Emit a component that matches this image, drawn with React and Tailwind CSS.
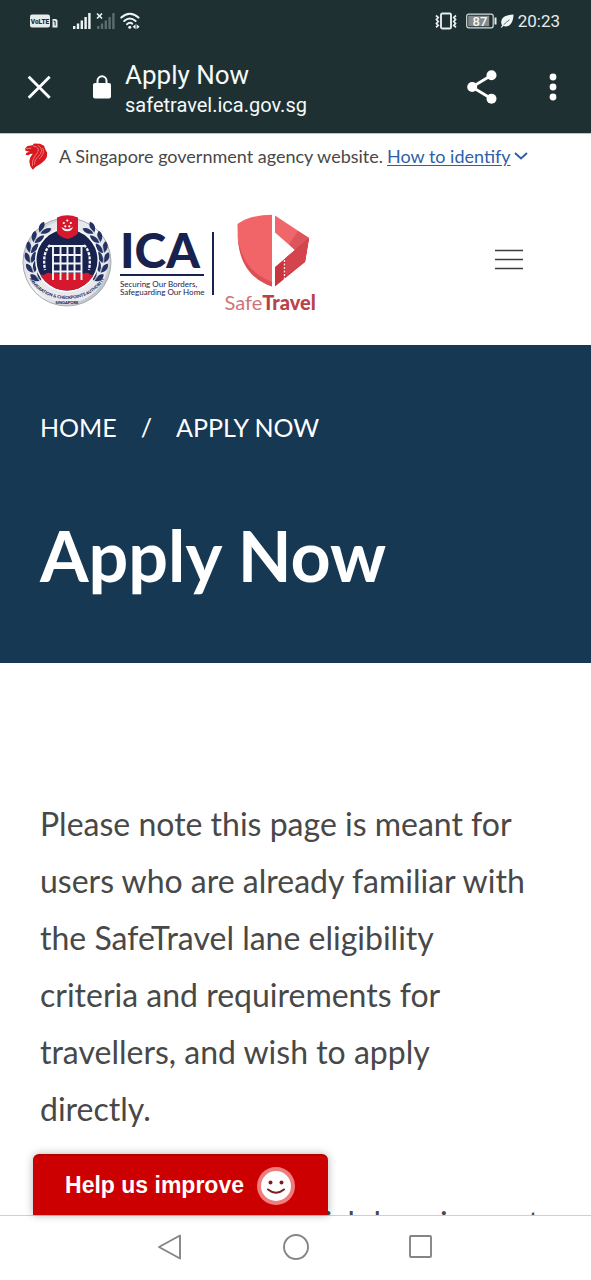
import React from "react";

function SignalBars({ active }) {
  return (
    <svg className="h-[18px] w-5" viewBox="0 0 20 18" aria-hidden="true">
      <g fill={active ? "#eef4f4" : "#5b6b6e"}>
        <rect x="1" y="14" width="2.4" height="3" />
        <rect x="4.8" y="11.5" width="2.4" height="5.5" />
        <rect x="8.6" y="8.5" width="2.4" height="8.5" />
        <rect x="12.4" y="5" width="2.4" height="12" />
        <rect x="16.2" y="1" width="2.4" height="16" />
      </g>
      {!active && <path d="M1 1.500l5 5M6 1.500l-5 5" stroke="#eef4f4" strokeWidth="1.600" />}
    </svg>
  );
}

function StatusBar() {
  return (
    <div className="flex h-[41px] items-center justify-between pl-[30px] pr-[31px]">
      <div className="flex items-center">
        <svg className="mr-3.5 h-3.5 w-7" viewBox="0 0 28 14" aria-hidden="true">
          <rect x="0" y="0.5" width="20" height="13" rx="2" fill="#e6ecec" />
          <text x="10" y="9.700" textAnchor="middle" fontFamily="Roboto, sans-serif" fontWeight="900" fontSize="6.500" fill="#1f3033">VoLTE</text>
          <path d="M22.500 5h3.700l1.300 1.400V13.500h-5V6z" fill="#e6ecec" />
          <path d="M23.600 7.300h1.500v4.200" fill="none" stroke="#1f3033" strokeWidth="1" />
        </svg>
        <SignalBars active />
        <span className="ml-1 flex"><SignalBars /></span>
        <svg className="ml-1 h-[18px] w-5" viewBox="0 0 20 18" aria-hidden="true">
          <g fill="none" stroke="#eef4f4" strokeWidth="2" strokeLinecap="round">
            <path d="M1.300 5.600Q9.800-2 18.500 5.600" />
            <path d="M4.200 9Q9.800 4 15.600 9" />
            <path d="M7 12.200Q9.800 9.700 12.200 11.600" />
          </g>
          <circle cx="9.800" cy="15.300" r="1.500" fill="#eef4f4" />
          <path d="M15.600 12.200v5l-3-2.500zM16.600 12.200v5l3-2.500z" fill="#eef4f4" />
        </svg>
      </div>
      <div className="flex items-center">
        <svg className="h-[18px] w-6" viewBox="0 0 24 18" fill="none" stroke="#e6ecec" aria-hidden="true">
          <rect x="7" y="1.500" width="10" height="15" rx="1.200" strokeWidth="1.900" />
          <path d="M2 3.500l2.200 2-1.700 2 1.700 2-1.700 2 1.700 2-2.200 1.800M22 3.500l-2.200 2 1.700 2-1.700 2 1.700 2-1.700 2 2.200 1.800" strokeWidth="1.800" />
        </svg>
        <svg className="ml-2 h-4 w-8" viewBox="0 0 32 16" aria-hidden="true">
          <rect x="0.700" y="1.200" width="26.500" height="13.600" rx="2" fill="none" stroke="#d5dddd" strokeWidth="1.200" />
          <rect x="2.200" y="2.700" width="21" height="10.600" fill="#84898c" />
          <text x="14" y="12.700" textAnchor="middle" fontFamily="Roboto, sans-serif" fontWeight="500" fontSize="13" fill="#f4f8f8">87</text>
          <rect x="28.500" y="4.500" width="2" height="7" fill="#e6ecec" />
        </svg>
        <svg className="ml-0.5 h-3.5 w-3.5" viewBox="0 0 14 14" aria-hidden="true">
          <path d="M13.500.500C7 .8 1.500 3 1.200 8c0 1.700.5 2.700 1 3.400L.6 13.200l.9.500 1.900-1.700C9.500 14 13.500 8.500 13.500.500z" fill="#f0f5f5" />
          <path d="M3.600 10.800Q6 8.300 9.500 5.800" stroke="#1f3033" strokeWidth=".7" fill="none" />
        </svg>
        <span className="ml-1 font-[Roboto,sans-serif] text-[17px] leading-5 text-[#e6ecec]">20:23</span>
      </div>
    </div>
  );
}

function BrowserBar() {
  return (
    <div className="flex h-[92px] items-center pl-[27px] pr-8">
      <button aria-label="Close tab" className="shrink-0">
        <svg className="h-6 w-6" viewBox="0 0 24 24" stroke="#fff" strokeWidth="2.800"><path d="M1.700 1.700l21 21M22.700 1.700l-21 21" /></svg>
      </button>
      <svg className="ml-[41px] h-6 w-5 shrink-0" viewBox="0 0 20 24" aria-hidden="true">
        <rect x="1" y="8" width="18" height="15.500" rx="2" fill="#fff" />
        <path d="M5.500 9V5.800a4.500 4.500 0 019 0V9" fill="none" stroke="#fff" strokeWidth="2" />
      </svg>
      <div className="ml-[13px] flex min-w-0 flex-1 flex-col pt-1 font-[Roboto,sans-serif] text-[#f5fafa]">
        <span className="text-[26px] leading-8">Apply Now</span>
        <span className="text-xl leading-7">safetravel.ica.gov.sg</span>
      </div>
      <button aria-label="Share" className="shrink-0">
        <svg className="h-[34px] w-[30px]" viewBox="0 0 30 34">
          <path d="M24.500 5.300L5 17l19.500 11.700" fill="none" stroke="#fff" strokeWidth="2.800" />
          <circle cx="24.500" cy="5.300" r="5" fill="#fff" /><circle cx="5.200" cy="17" r="5" fill="#fff" /><circle cx="24.500" cy="28.700" r="5" fill="#fff" />
        </svg>
      </button>
      <button aria-label="More options" className="ml-[50px] shrink-0">
        <svg className="h-7 w-3" viewBox="0 0 12 28" fill="#fff"><circle cx="6" cy="4" r="3.400" /><circle cx="6" cy="14" r="3.400" /><circle cx="6" cy="24" r="3.400" /></svg>
      </button>
    </div>
  );
}

function LionHead() {
  return (
    <svg className="h-[27px] w-6 shrink-0" viewBox="0 0 24 27" aria-hidden="true">
      <path d="M1 5.500L3.500 3l5-.8L10 .5l6 .2 4 2 1.500 4 1.700 3-.4 4.500-2 3-4 3.500-5 3-3 3-2.500-3.500-1-5 1-4 2.500-3.500-2.500.3-2 1.300-2.800-.6 1-2 3-1-4-1z" fill="#d71920" />
      <path d="M9 3c6 .5 6.500 4.500 3.500 8S8 18 8.500 23M14 2.500c5 3 4 7 1 10s-4.500 5-4.500 9M18.500 5c2.500 5-1 9-3.500 11M1.800 5.800l5.500-.6" fill="none" stroke="#ff9c96" strokeWidth=".7" />
    </svg>
  );
}

const leaves = [
  [15, 63, -35], [10, 54, -20], [8, 44, -5], [9, 34, 12], [14, 24, 28], [21, 15, 42],
];

function Wreath() {
  return (
    <g>
      {leaves.map(([x, y, a]) => (
        <g key={y} transform={`translate(${x} ${y}) rotate(${a})`}>
          <path d="M0 5C-6 2-6-3-4-6 0-4 1 0 0 5zM1 5C0-1 3-5 6-6 8-1 5 3 1 5z" fill="#253363" />
          <path d="M0 6V-3" stroke="#dfe2ec" strokeWidth=".6" />
        </g>
      ))}
    </g>
  );
}

function Emblem() {
  return (
    <svg className="h-[94px] w-[90px] shrink-0" viewBox="0 0 90 94" role="img" aria-label="Immigration and Checkpoints Authority crest">
      <defs>
        <linearGradient id="ring" x1="0" y1="0" x2="1" y2="1">
          <stop offset="0" stopColor="#c4c6cc" /><stop offset=".5" stopColor="#f6f6f8" /><stop offset="1" stopColor="#a9acb5" />
        </linearGradient>
        <clipPath id="disc"><circle cx="45" cy="46" r="30.500" /></clipPath>
        <path id="motto" d="M4.500 52A40.500 33 0 0085.500 52" />
      </defs>
      <circle cx="45" cy="48" r="44" fill="url(#ring)" stroke="#a8abb4" strokeWidth="1" />
      <circle cx="45" cy="48" r="41" fill="#e8e9ed" />
      <Wreath />
      <g transform="translate(90 0) scale(-1 1)"><Wreath /></g>
      <circle cx="45" cy="46" r="32" fill="#fff" />
      <circle cx="45" cy="46" r="30.500" fill="#17224f" />
      <path clipPath="url(#disc)" d="M14 64q4-5 8-3 4-4 8-1 4-3 7 0 4-3 8 0 4-3 8 0 4-3 8 0 4-3 8 1 5-1 8 3v16H14z" fill="#d5182d" />
      <g stroke="#f4f5f8" fill="none">
        <path d="M31 31V66M38.500 31V66M45.500 31V66M52.500 31V66M59.500 31V66" strokeWidth="1.900" />
        <path d="M28 32H62M30 41H60M30 49.500H60M30 57.500H60" strokeWidth="2" />
        <path d="M28 31Q20 39 23 56M62 31Q70 39 67 56" strokeWidth="2.300" strokeDasharray="3 1.300" />
      </g>
      <path d="M35 3.500Q45-1 56 3.500V19Q53 23 45.500 25 38 23 35 19z" fill="#d5182d" />
      <path d="M39.500 13a6 6 0 0011.500 0 7.500 6 0 01-11.500 0z" fill="#fff" />
      <g fill="#fff"><circle cx="45.300" cy="6.500" r="1.100" /><circle cx="41.800" cy="9" r="1.100" /><circle cx="48.800" cy="9" r="1.100" /><circle cx="43.300" cy="12.300" r="1.100" /><circle cx="47.300" cy="12.300" r="1.100" /></g>
      <text fontFamily="Lato, sans-serif" fontWeight="900" fontSize="4.200" fill="#17224f"><textPath href="#motto" startOffset="50%" textAnchor="middle">IMMIGRATION &amp; CHECKPOINTS AUTHORITY</textPath></text>
      <text x="45" y="89.500" textAnchor="middle" fontFamily="Lato, sans-serif" fontWeight="900" fontSize="4" fill="#17224f">SINGAPORE</text>
    </svg>
  );
}

function SafeTravelShield() {
  return (
    <svg className="ml-1.5 h-[74px] w-[74px]" viewBox="0 0 74 74" aria-hidden="true">
      <path d="M36 .8V72.500C14 65 1 46 1.500 10Q14 1 36 .8z" fill="#f16569" />
      <path d="M1.500 19C4 45 15 60 36 68V72.500C14 65 2 48 1.500 19z" fill="#dc4f57" />
      <path d="M39 1.500L73 24 69 30 59 36 39 18.500z" fill="#f0676b" />
      <path d="M62 17L73 24 69 48 59 36 53 30.500z" fill="#dd555c" />
      <path d="M73 24L69 48 39 72.500V53L59 36z" fill="#c9353e" />
      <path d="M73 24L69 48 50 62V43.500L59 36z" fill="#d4444c" />
      <path d="M48.500 46V65" stroke="#ffe6e6" strokeWidth="1.400" strokeDasharray="2 1.500" />
    </svg>
  );
}

function SiteHeader() {
  return (
    <header className="border-t border-[#bcc3c8] bg-white">
      <div className="flex items-center px-6 pt-2 text-lg leading-7 text-[#484848]">
        <LionHead />
        <p className="ml-[11px]">A Singapore government agency website.</p>
        <button className="ml-1 flex items-center text-[#2f5fa8]">
          <span className="underline underline-offset-2">How to identify</span>
          <svg className="ml-0.5 h-4 w-4" viewBox="0 0 16 16" fill="none" stroke="currentColor" strokeWidth="2" aria-hidden="true"><path d="M2 5l6 5.500L14 5" /></svg>
        </button>
      </div>
      <div className="flex items-start pb-[29px] pl-[22px] pr-[68px] pt-11">
        <Emblem />
        <div className="ml-2 mt-3 text-[#17224f]">
          <div className="text-5xl leading-[48px] font-black">ICA</div>
          <div className="border-t-2 border-[#17224f] pt-1 text-[8px] leading-2 whitespace-nowrap">
            Securing Our Borders,<br />Safeguarding Our Home
          </div>
        </div>
        <div className="ml-2 mt-[18px] h-[63px] w-0.5 shrink-0 bg-[#17224f]" />
        <div className="ml-2.5 flex flex-col items-center">
          <SafeTravelShield />
          <span className="text-xl leading-7 text-[#cf7478]">Safe<b className="font-black text-[#b9424a]">Travel</b></span>
        </div>
        <button aria-label="Open menu" className="ml-auto mt-[34px]">
          <svg className="h-6 w-7" viewBox="0 0 28 24" stroke="#3c3c3c" strokeWidth="1.500"><path d="M0 2.500h28M0 11.500h28M0 20.500h28" /></svg>
        </button>
      </div>
    </header>
  );
}

function Hero() {
  return (
    <section className="bg-[#163853] px-10 pb-[60px] pt-16 text-white">
      <nav aria-label="Breadcrumb" className="flex gap-6 text-[25px] leading-9">
        <a href="#home">HOME</a>
        <span>/</span>
        <a href="#apply">APPLY NOW</a>
      </nav>
      <h1 className="mt-[62px] text-[70px] leading-[96px] font-bold">Apply Now</h1>
    </section>
  );
}

function FeedbackButton() {
  return (
    <button className="absolute bottom-0 left-[33px] flex h-[61px] w-[295px] items-center justify-center gap-3 rounded-t-md border-t-2 border-[#b00000] bg-[#cc0000] font-['Liberation_Sans',sans-serif] text-[23px] font-bold text-white shadow-[0_0_8px_rgba(0,0,0,0.3)]">
      Help us improve
      <svg className="h-10 w-10" viewBox="0 0 40 40" aria-hidden="true">
        <circle cx="20" cy="20" r="19" fill="#ee7d7d" /><circle cx="20" cy="20" r="15" fill="#fff" />
        <circle cx="14.500" cy="16.500" r="2" fill="#7d1c1c" /><circle cx="25.500" cy="16.500" r="2" fill="#7d1c1c" />
        <path d="M12 23.500q8 6.500 16 0" fill="none" stroke="#7d1c1c" strokeWidth="2" strokeLinecap="round" />
      </svg>
    </button>
  );
}

function SystemNav() {
  return (
    <nav aria-label="System" className="flex h-16 shrink-0 items-center justify-center gap-[97px] bg-white text-[#858585]">
      <button aria-label="Back"><svg className="h-7 w-7" viewBox="0 0 28 28" fill="none" stroke="currentColor" strokeWidth="1.900" strokeLinejoin="round"><path d="M23 1.500v23L2 13z" /></svg></button>
      <button aria-label="Home"><svg className="h-7 w-7" viewBox="0 0 28 28" fill="none" stroke="currentColor" strokeWidth="1.900"><circle cx="14" cy="13" r="12" /></svg></button>
      <button aria-label="Recent apps"><svg className="h-7 w-7" viewBox="0 0 28 28" fill="none" stroke="currentColor" strokeWidth="1.900"><rect x="3" y="2" width="21" height="21" rx="1" /></svg></button>
    </nav>
  );
}

export default function App() {
  return (
    <div className="flex h-screen flex-col bg-white font-[Lato,sans-serif]">
      <div className="shrink-0 bg-[#1f3033]">
        <StatusBar />
        <BrowserBar />
      </div>
      <div className="relative flex min-h-0 flex-1 flex-col border-b border-[#cfcfcf]">
        <div className="min-h-0 flex-1 overflow-y-auto [scrollbar-width:none]">
          <SiteHeader />
          <Hero />
          <main className="px-10 pt-[132px] text-[32px] leading-[57px] text-[#484848]">
            <p className="pr-5">Please note this page is meant for users who are already familiar with the SafeTravel lane eligibility criteria and requirements for travellers, and wish to apply directly.</p>
            <p className="mt-[57px]">If you are unsure which lane is most suitable, please check the requirements for each lane first.</p>
          </main>
        </div>
        <FeedbackButton />
      </div>
      <SystemNav />
    </div>
  );
}
